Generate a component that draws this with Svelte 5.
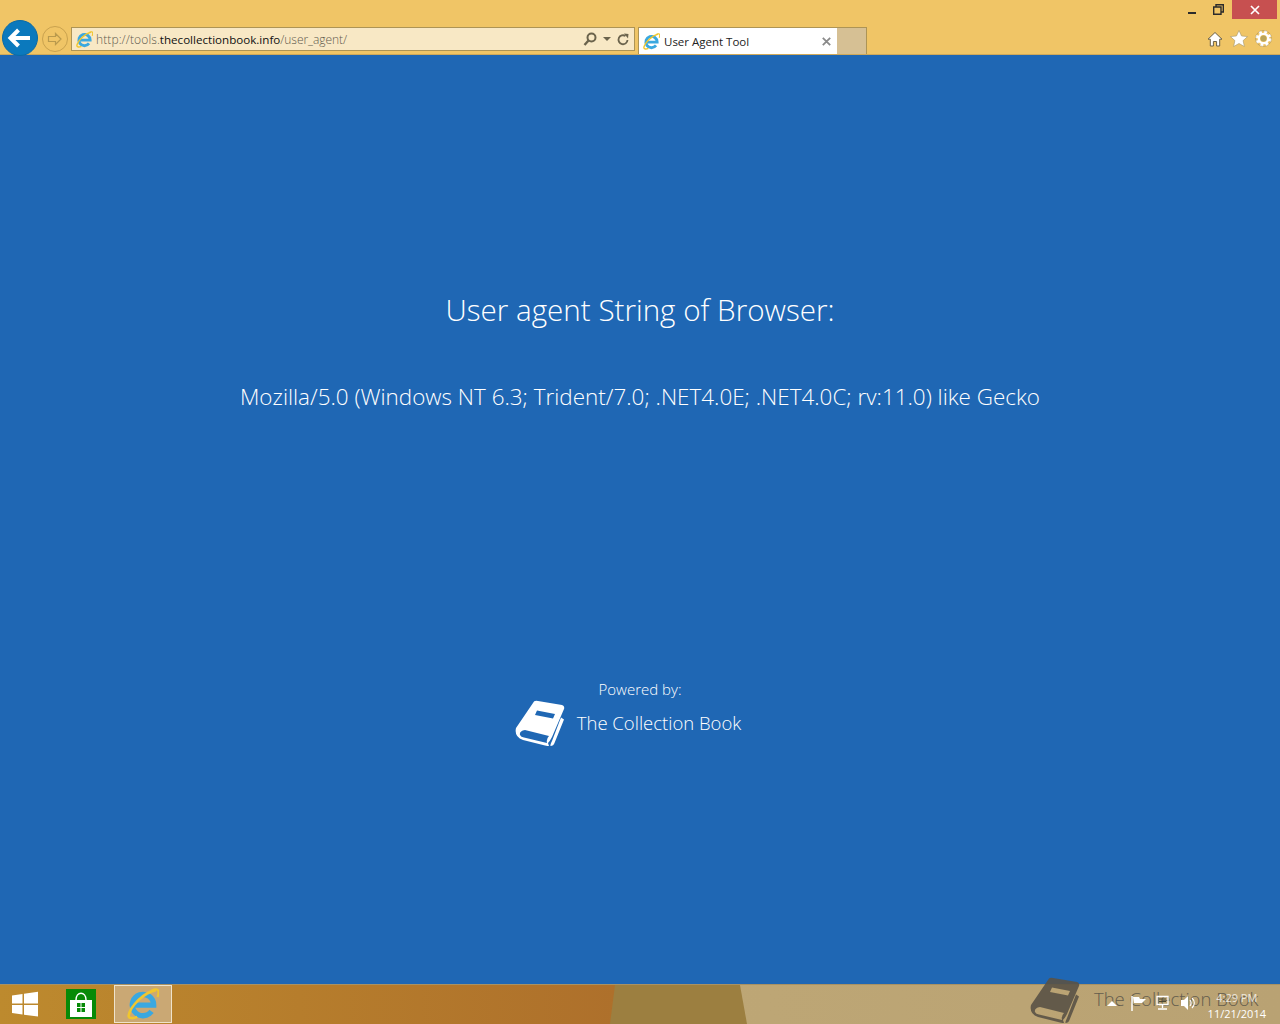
<script>
  const ua = 'Mozilla/5.0 (Windows NT 6.3; Trident/7.0; .NET4.0E; .NET4.0C; rv:11.0) like Gecko';
</script>

<svelte:head><title>User Agent Tool</title></svelte:head>

{#snippet ie(size)}
  <svg class="ie" width={size} height={size} viewBox="1 1 30 30" aria-hidden="true">
    <path d="M6.500 17H26A10 10 0 1 0 24 23" fill="none" stroke="#3aa8e0" stroke-width="5"/>
    <path d="M28 3C17 5 4 18 2.500 27c0 2.500 4 3 8 1" fill="none" stroke="#f0c62e" stroke-width="2.400"/>
    <path d="M24 3.500c4-2 7-1.500 6.500 2 0 1.500-.5 3-1 4" fill="none" stroke="#f0c62e" stroke-width="2"/>
  </svg>
{/snippet}

{#snippet book(cls)}
  <svg class={cls} viewBox="0 0 50 46" aria-hidden="true">
    <path fill-rule="evenodd" d="M18 3Q19 0 23 1L47 5Q50 6 49 9L37 37Q35 41 33 43L34 46Q33 46 30 45.500L8 40Q-1 37 1 28ZM22 10.500 20 15 38 18.500 40 14ZM10 30Q4 31 5 35 6 37 9 37.500L32 43Q31 39 34 36Z"/>
    <path d="M46 17.500 49 19.500 39.500 43Q38.500 46 35.500 46 35 45 37 41Z"/>
  </svg>
{/snippet}

<div class="screen">
  <header class="chrome">
    <div class="caption">
      <button class="win-btn" aria-label="Minimize"><span class="min"></span></button>
      <button class="win-btn" aria-label="Restore">
        <svg width="11" height="11" viewBox="0 0 11 11"><path d="M3 2.500V.7h7.300V8H8.500M.7 3h7.300v7.300H.7z" fill="none" stroke="#2b2b2b" stroke-width="1.400"/></svg>
      </button>
      <button class="win-btn close" aria-label="Close">
        <svg width="10" height="10" viewBox="0 0 10 10"><path d="M1 1l8 8M9 1 1 9" stroke="#fff" stroke-width="1.700"/></svg>
      </button>
    </div>
    <div class="toolbar">
      <button class="back" aria-label="Back">
        <svg width="26" height="22" viewBox="0 0 26 22"><path d="M11.500 3 3.500 11l8 8M4 11h19" fill="none" stroke="#fff" stroke-width="4"/></svg>
      </button>
      <button class="forward" aria-label="Forward">
        <svg width="16" height="14" viewBox="0 0 16 14"><path d="M8.500 1.500 14 7l-5.500 5.500V9.500H1.500v-5h7z" fill="none" stroke="#b99a4d" stroke-width="1.200"/></svg>
      </button>
      <div class="address">
        {@render ie(17)}
        <span class="url">http://tools.<b>thecollectionbook.info</b><i>/user_agent/</i></span>
        <svg class="tool search" width="14" height="14" viewBox="0 0 14 14"><circle cx="8.500" cy="5.500" r="4" fill="none" stroke="#6b634c" stroke-width="2"/><path d="M5.500 8.500 1.500 13" stroke="#6b634c" stroke-width="2.400"/></svg>
        <span class="caret"></span>
        <svg class="tool refresh" width="12" height="13" viewBox="0 0 12 13"><path d="M10.500 7a4.500 4.500 0 1 1-2-4" fill="none" stroke="#6b634c" stroke-width="1.800"/><path d="M7 .5l4.500.5-.5 4.500z" fill="#6b634c"/></svg>
      </div>
      <div class="tab">
        {@render ie(17)}
        <span class="tab-title">User Agent Tool</span>
        <svg class="tab-x" width="9" height="9" viewBox="0 0 9 9"><path d="M.8.8l7.400 7.400M8.200.8.800 8.200" stroke="#8a8a8a" stroke-width="1.800"/></svg>
      </div>
      <div class="new-tab"></div>
      <div class="icons">
        <svg width="16" height="16" viewBox="0 0 16 16"><path d="M8 1.500 15 8.200h-2.300V15H9.600v-4.500H6.400V15H3.300V8.200H1z" fill="#fff" stroke="#6b6148" stroke-width="1"/></svg>
        <svg width="18" height="17" viewBox="0 0 17 16"><path d="M8.500.4l2.400 5.200 5.700.6-4.200 3.800 1.200 5.600-5.100-2.900-5.100 2.900 1.200-5.600-4.200-3.800 5.700-.6z" fill="#fff" stroke="#a89a70" stroke-width=".6"/></svg>
        <svg width="17" height="17" viewBox="0 0 16 16"><circle cx="8" cy="8" r="5.800" fill="none" stroke="#fff" stroke-width="3.600" stroke-dasharray="2.400 2.150"/><circle cx="8" cy="8" r="4.400" fill="none" stroke="#fff" stroke-width="2.200"/><circle cx="8" cy="8" r="7.500" fill="none" stroke="#6b6148" stroke-width=".5" opacity=".6"/><circle cx="8" cy="8" r="2.800" fill="#b9a45a"/></svg>
      </div>
    </div>
  </header>

  <main class="page">
    <h1>User agent String of Browser:</h1>
    <p class="ua">{ua}</p>
    <div class="powered">
      <span class="label">Powered by:</span>
      <div class="brand">
        {@render book('book')}
        <span class="brand-name">The Collection Book</span>
      </div>
    </div>
  </main>

  <footer class="taskbar">
    <div class="tasks">
      <button class="start" aria-label="Start">
        <svg width="28" height="26" viewBox="0 0 28 26"><path d="M1 4.500 11.500 3v9.500H1zM13 2.800 27 .8v11.700H13zM1 14h10.500v9.500L1 22zM13 14h14v11.500L13 23.700z" fill="#fff"/></svg>
      </button>
      <div class="store">
        <svg width="24" height="27" viewBox="0 0 24 27"><path d="M1 9h22v17H1z" fill="#fff"/><path d="M7 9C7 0 17 0 17 9" fill="none" stroke="#fff" stroke-width="1.500"/><path d="M8 12h3.500v4H8zM12.500 12H16v4h-3.500zM8 17h3.500v4H8zM12.500 17H16v4h-3.500z" fill="#078a07"/></svg>
      </div>
      <div class="ie-task">{@render ie(32)}</div>
    </div>
    <div class="tray">
      <div class="watermark">
        {@render book('wm-book')}
        <span>The Collection Book</span>
      </div>
      <div class="tray-icons">
        <span class="up"></span>
        <svg width="17" height="18" viewBox="0 0 17 18"><path d="M2 2v15" stroke="#fff" stroke-width="1.500"/><path d="M3 3h6l1 2h6l-4 4H4z" fill="#fff"/></svg>
        <svg width="15" height="16" viewBox="0 0 15 16"><path d="M2 1.500h11v8H2zM7.500 10v3M3 14h9" fill="none" stroke="#fff" stroke-width="1.300"/><path d="M4 4h7M4 6.500h7" stroke="#4d4a35"/></svg>
        <svg class="vol" width="17" height="16" viewBox="0 0 17 16"><path d="M1 5h3l4-4v14l-4-4H1z" fill="#fff"/><path d="M10 5c1.500 2 1.500 4 0 6M12 3c3 3 3 7 0 10" fill="none" stroke="#fff" stroke-width="1.200"/></svg>
      </div>
      <div class="clock">
        <span>4:29 PM</span>
        <span>11/21/2014</span>
      </div>
    </div>
  </footer>
</div>

<style>
  :global(body) { margin: 0; overflow: hidden; }
  button { border: 0; padding: 0; background: none; display: flex; align-items: center; justify-content: center; }
  .screen {
    width: 1280px; height: 1024px; display: flex; flex-direction: column;
    background: #1f67b4; font-family: "Open Sans", "Noto Sans", sans-serif; overflow: hidden;
  }
  .chrome { height: 55px; flex: none; background: #f0c566; box-sizing: border-box; border-bottom: 1px solid #cfa95a; position: relative; }
  .caption { display: flex; justify-content: flex-end; height: 19px; padding-right: 3px; }
  .win-btn { width: 26px; height: 19px; }
  .win-btn.close { width: 45px; background: #c75050; margin-left: 1px; }
  .min { width: 8px; height: 2px; background: #2b2b2b; margin-top: 6px; }
  .toolbar { display: flex; align-items: flex-start; height: 35px; position: relative; }
  .back {
    width: 36px; height: 36px; border-radius: 50%; background: #0b79bd; margin: 1px 0 0 2px;
    border: 1px solid #0a6aa6; box-sizing: border-box;
  }
  .forward {
    width: 26px; height: 26px; border-radius: 50%; border: 1px solid #c9a24e; box-sizing: border-box;
    margin: 7px 0 0 4px;
  }
  .address {
    width: 564px; height: 24px; margin: 8px 0 0 3px; box-sizing: border-box;
    background: #f8e8c5; border: 1px solid #ad9455; display: flex; align-items: center; padding: 0 5px 0 4px;
  }
  .url { font-size: 12px; font-weight: 300; color: #5f5a4d; margin-left: 3px; flex: 1; letter-spacing: .1px; }
  .url b { font-weight: 400; color: #111; font-size: 11.600px; letter-spacing: 0; }
  .url i { font-style: normal; letter-spacing: -.05px; }
  .search { margin-right: 2px; }
  .caret { width: 0; height: 0; border: 4px solid transparent; border-top-color: #6b634c; border-bottom: 0; margin: 0 6px 0 4px; }
  .tool { flex: none; }
  .tab {
    width: 199px; height: 27px; margin: 8px 0 0 3px; background: #fff; display: flex; align-items: center;
    box-sizing: border-box; padding: 0 6px 0 4px; border-top: 1px solid #ad9455; border-left: 1px solid #ad9455;
  }
  .tab-title { font-size: 11.500px; color: #222; margin-left: 4px; flex: 1; }
  .new-tab { width: 30px; height: 27px; margin-top: 8px; box-sizing: border-box; background: #d6c094; border: 1px solid #ad9455; border-width: 1px 1px 0 0; }
  .icons { display: flex; gap: 7px; margin-left: auto; margin-right: 8px; margin-top: 11px; align-items: center; }
  .ie { flex: none; }
  .page { flex: 1; position: relative; color: #fff; display: flex; flex-direction: column; align-items: center; font-weight: 300; }
  h1 { margin: 233px 0 0; font-size: 29.600px; font-weight: 300; line-height: 44px; }
  .ua { margin: 47px 0 0; font-size: 22.450px; line-height: 36px; font-weight: 300; }
  .powered { margin-top: 264px; display: flex; flex-direction: column; align-items: center; }
  .label { font-size: 15px; line-height: 20px; }
  .brand { display: flex; align-items: center; gap: 12px; margin-top: 1px; margin-left: -24px; }
  .book { width: 50px; height: 46px; fill: #fff; }
  .brand-name { font-size: 18.500px; margin-bottom: 1px; }
  .taskbar {
    height: 40px; flex: none; display: flex; position: relative;
    background: linear-gradient(90deg, #bd8a2e 0, #b67d2c 300px, #ae702b 615px);
    border-top: 1px solid #a89264; box-sizing: border-box;
  }
  .taskbar::before {
    content: ""; position: absolute; inset: 0;
    background: #9c7f40; clip-path: polygon(615px 0, 100% 0, 100% 100%, 610px 100%);
  }
  .taskbar::after {
    content: ""; position: absolute; inset: 0;
    background: linear-gradient(90deg, #c3ac78, #b9a273);
    clip-path: polygon(740px 0, 100% 0, 100% 100%, 747px 100%);
  }
  .tasks { display: flex; align-items: flex-start; position: relative; z-index: 1; }
  .start { width: 50px; height: 38px; }
  .store { width: 30px; height: 30px; background: #078a07; margin: 4px 0 0 16px; display: flex; align-items: center; justify-content: center; }
  .ie-task {
    width: 58px; height: 38px; box-sizing: border-box; margin: 0 0 0 18px; background: #caa874;
    border: 1px solid #efe3cb; display: flex; align-items: center; justify-content: center;
  }
  .tray { margin-left: auto; position: relative; z-index: 1; width: 260px; display: flex; }
  .watermark { position: absolute; left: 10px; top: -8px; display: flex; align-items: center; gap: 14px; color: #5a5549; opacity: .9; }
  .wm-book { width: 50px; height: 46px; fill: #5a5346; }
  .watermark span { font-size: 18.500px; font-weight: 300; margin-bottom: 4px; }
  .tray-icons { position: absolute; left: 87px; top: 9px; display: flex; gap: 8px; align-items: center; }
  .up { width: 0; height: 0; border: 5px solid transparent; border-bottom-color: #fff; border-top: 0; margin-right: 5px; }
  .vol { margin-left: 2px; }
  .clock { position: absolute; right: 14px; top: 5px; display: flex; flex-direction: column; align-items: center; color: #fff; font-size: 11px; line-height: 16px; }
  .clock span:first-child { opacity: .75; }
</style>
